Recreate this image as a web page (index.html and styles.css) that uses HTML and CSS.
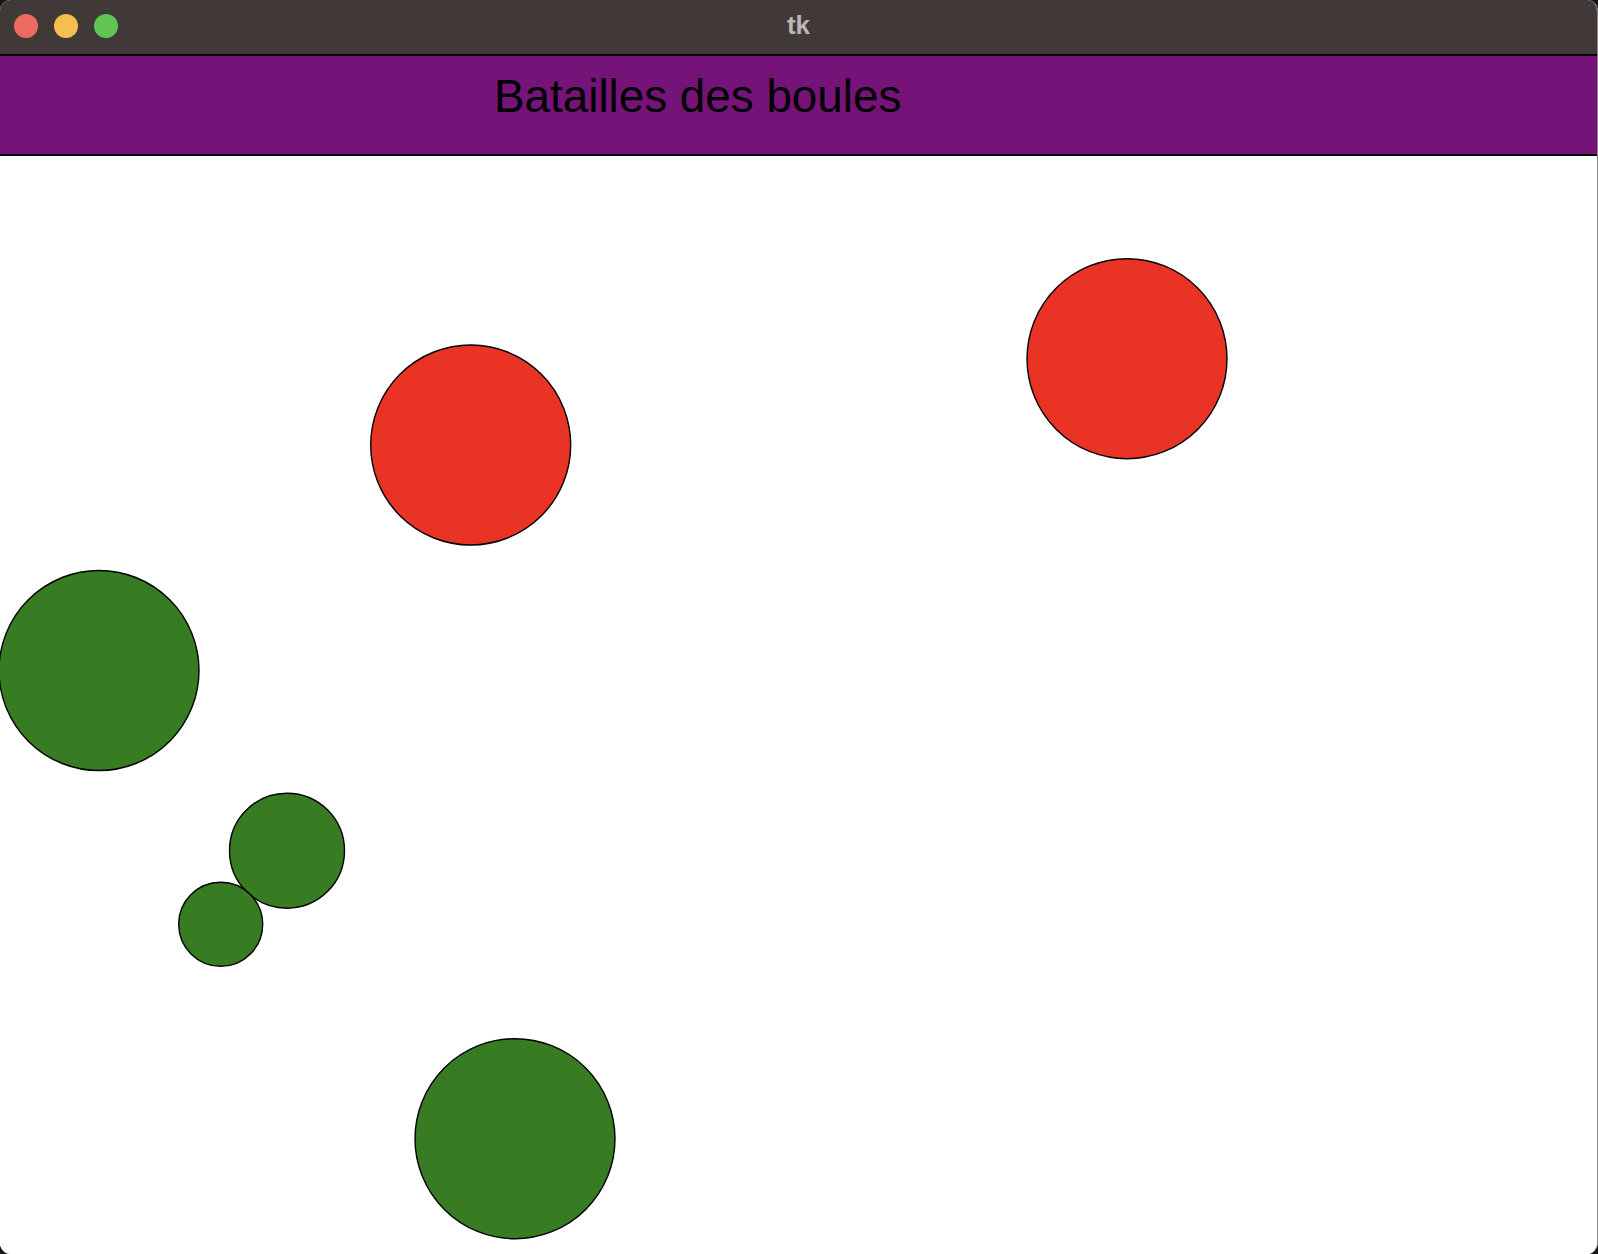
FILE: index.html
```html
<!DOCTYPE html>
<html lang="fr">
<head>
<meta charset="utf-8">
<title>tk</title>
<link rel="stylesheet" href="styles.css">
</head>
<body>
<div class="window">
  <div class="titlebar">
    <div class="lights">
      <span class="light close"></span>
      <span class="light minimize"></span>
      <span class="light zoom"></span>
    </div>
    <div class="title">tk</div>
  </div>
  <div class="header">
    <h1 class="heading">Batailles des boules</h1>
  </div>
  <div class="canvas">
    <svg class="board" width="1598" height="1098" viewBox="0 0 1598 1098">
      <circle class="ball red" cx="470.7" cy="289" r="100"/>
      <circle class="ball red" cx="1127" cy="202.7" r="100"/>
      <circle class="ball green" cx="99" cy="514.5" r="100"/>
      <circle class="ball green" cx="287" cy="694.7" r="57.5"/>
      <circle class="ball green" cx="220.7" cy="768.3" r="42"/>
      <circle class="ball green" cx="515" cy="982.7" r="100"/>
    </svg>
  </div>
</div>
</body>
</html>
```
FILE: styles.css
```css
* { box-sizing: border-box; }
html, body {
  margin: 0;
  padding: 0;
  background: #14171c;
  width: 1598px;
  height: 1254px;
  overflow: hidden;
}
.window {
  width: 1598px;
  height: 1254px;
  border-radius: 11px;
  overflow: hidden;
  display: flex;
  flex-direction: column;
  background: #ffffff;
  border-right: 1px solid #8a8486;
}
.titlebar {
  height: 56px;
  flex: none;
  background: #413938;
  border-bottom: 2px solid #000;
  position: relative;
  display: flex;
  align-items: center;
}
.lights {
  display: flex;
  gap: 16px;
  padding-left: 14px;
  margin-top: -2px;
}
.light {
  width: 24px;
  height: 24px;
  border-radius: 50%;
  display: block;
}
.close { background: #ee6a5f; }
.minimize { background: #f5bf4f; }
.zoom { background: #61c554; }
.title {
  position: absolute;
  left: 0;
  right: 0;
  top: 12px;
  text-align: center;
  font-family: "Liberation Sans", Arial, sans-serif;
  font-weight: bold;
  font-size: 26px;
  line-height: 26px;
  color: #bcb6b4;
  padding-left: 0;
}
.header {
  height: 100px;
  flex: none;
  background: #751379;
  border-bottom: 2px solid #000;
  padding-top: 18px;
  padding-left: 494px;
}
.heading {
  margin: 0;
  font-family: "Liberation Sans", Arial, sans-serif;
  font-weight: normal;
  font-size: 45.8px;
  line-height: 1;
  color: #000;
}
.canvas {
  flex: 1;
  background: #fff;
  position: relative;
}
.board {
  display: block;
}
.ball {
  stroke: #000;
  stroke-width: 1.4;
}
.red { fill: #e93425; }
.green { fill: #377c22; }
```
